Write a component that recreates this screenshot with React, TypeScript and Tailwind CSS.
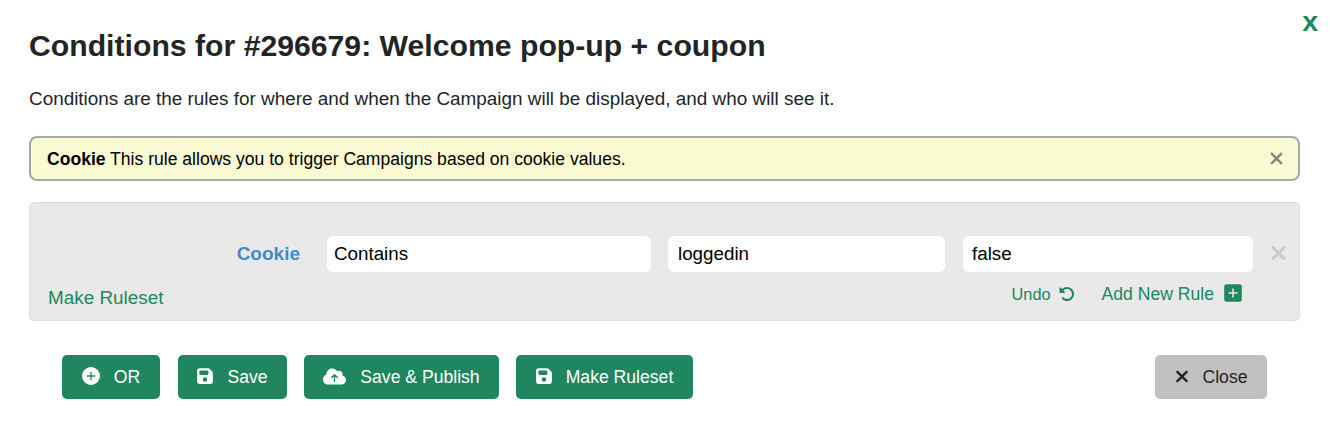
import type { ReactNode } from "react";
import { FaFloppyDisk, FaRotateLeft, FaXmark } from "react-icons/fa6";

function CirclePlus() {
  return (
    <svg viewBox="0 0 18 18" className="mb-[2px] h-[18px] w-[18px]" fill="none">
      <circle cx="9" cy="9" r="9" fill="currentColor" />
      <path d="M5.3 9h7.4M9 5.3v7.4" stroke="#20865f" strokeWidth="1.3" strokeLinecap="round" />
    </svg>
  );
}

function CloudUp() {
  return (
    <svg viewBox="0 0 640 512" className="mb-[2px] h-[19px] w-[23px]" fill="none">
      <path
        fill="currentColor"
        d="M0 336c0 79.5 64.5 144 144 144H512c70.7 0 128-57.3 128-128c0-61.9-44-113.6-102.4-125.4c4.1-10.7 6.4-22.4 6.4-34.6c0-53-43-96-96-96c-19.7 0-38.1 6-53.3 16.2C367 64.2 315.3 32 256 32C167.6 32 96 103.6 96 192c0 2.7 .1 5.4 .2 8.1C40.2 219.8 0 273.2 0 336z"
      />
      <path d="M320 398V210M238 286l82-82 82 82" stroke="#20865f" strokeWidth="36" strokeLinecap="round" strokeLinejoin="round" />
    </svg>
  );
}

function SquarePlus() {
  return (
    <svg viewBox="0 0 18 18" className="mb-[3px] ml-[10px] h-[18px] w-[18px]" fill="none">
      <rect x="0.2" y="0.2" width="17.6" height="17.6" rx="2.4" fill="currentColor" />
      <path d="M5 9h8M9 5v8" stroke="#e9e9e9" strokeWidth="1.5" strokeLinecap="round" />
    </svg>
  );
}

const actions = [
  { label: "OR", icon: <CirclePlus />, size: "w-[98px] mr-[18px]" },
  { label: "Save", icon: <FaFloppyDisk className="mb-[2px] h-[18px] w-4" />, size: "w-[109px] mr-[17px]" },
  { label: "Save & Publish", icon: <CloudUp />, size: "w-[195px] mr-[17px]" },
  { label: "Make Ruleset", icon: <FaFloppyDisk className="mb-[2px] h-[18px] w-4" />, size: "w-[177px]" },
];

function Field({ className, children }: { className: string; children: ReactNode }) {
  return (
    <div className={`flex h-9 items-center rounded-md bg-white text-[18.8px] text-black ${className}`}>
      {children}
    </div>
  );
}

export default function App() {
  return (
    <div className="h-[429px] w-[1330px] overflow-hidden bg-white pl-[29px] font-['Liberation_Sans',Arial,sans-serif] text-[#232525]">
      <div className="flex justify-between">
        <h1 className="mt-[27px] text-[30.2px] leading-[38px] font-bold">
          Conditions for #296679: Welcome pop-up + coupon
        </h1>
        <button className="mt-[5px] mr-[12px] h-8 text-[28.5px] leading-8 font-bold text-[#20865f]">x</button>
      </div>

      <p className="mt-[22px] text-[18.9px] leading-6">
        Conditions are the rules for where and when the Campaign will be displayed, and who will see it.
      </p>

      {/* Rule hint */}
      <div className="mt-[25px] flex h-[45px] w-[1271px] items-center justify-between rounded-lg border-2 border-[#a7a7a7] bg-[#f9f9d2] pr-[14px] pl-4 text-[17.57px] text-black">
        <p className="pt-px">
          <b>Cookie</b> This rule allows you to trigger Campaigns based on cookie values.
        </p>
        <FaXmark className="mb-px h-[19px] w-[15px] text-[#838377]" />
      </div>

      {/* Ruleset */}
      <div className="mt-[21px] h-[119px] w-[1271px] rounded-[5px] border border-[#dcdcdc] bg-[#e9e9e9] pt-[33px]">
        <div className="flex items-center">
          <div className="w-[270px] text-right text-[19px] font-bold text-[#428bca]">Cookie</div>
          <Field className="ml-[27px] w-[324px] pl-[7px]">Contains</Field>
          <Field className="ml-[17px] w-[277px] pl-[10px]">loggedin</Field>
          <Field className="ml-[18px] w-[290px] pl-[9px]">false</Field>
          <FaXmark className="mb-[3px] ml-[17px] h-[22px] w-[17px] stroke-current stroke-[14px] text-[#cbcbcb]" />
        </div>
        <div className="flex items-start text-[#20865f]">
          <button className="mt-[14px] ml-[18px] text-[18.9px] leading-6">Make Ruleset</button>
          <button className="mt-[10px] ml-auto flex items-center text-[16.3px] leading-6">
            Undo
            <FaRotateLeft className="ml-[8px] h-4 w-4" />
          </button>
          <button className="mt-[10px] mr-[57px] ml-[27px] flex items-center text-[17.6px] leading-6">
            Add New Rule
            <SquarePlus />
          </button>
        </div>
      </div>

      {/* Footer buttons */}
      <div className="mt-[34px] flex pl-[33px]">
        {actions.map((action) => (
          <button
            key={action.label}
            className={`flex h-11 items-center justify-center gap-[14px] rounded-[5px] bg-[#20865f] text-[17.6px] whitespace-nowrap text-white ${action.size}`}
          >
            {action.icon}
            {action.label}
          </button>
        ))}
        <button className="mr-[63px] ml-auto flex h-11 w-[112px] items-center justify-center gap-[14px] rounded-[5px] bg-[#c1c1c1] text-[17.6px]">
          <FaXmark className="mb-[2px] h-[19px] w-[14px]" />
          Close
        </button>
      </div>
    </div>
  );
}
